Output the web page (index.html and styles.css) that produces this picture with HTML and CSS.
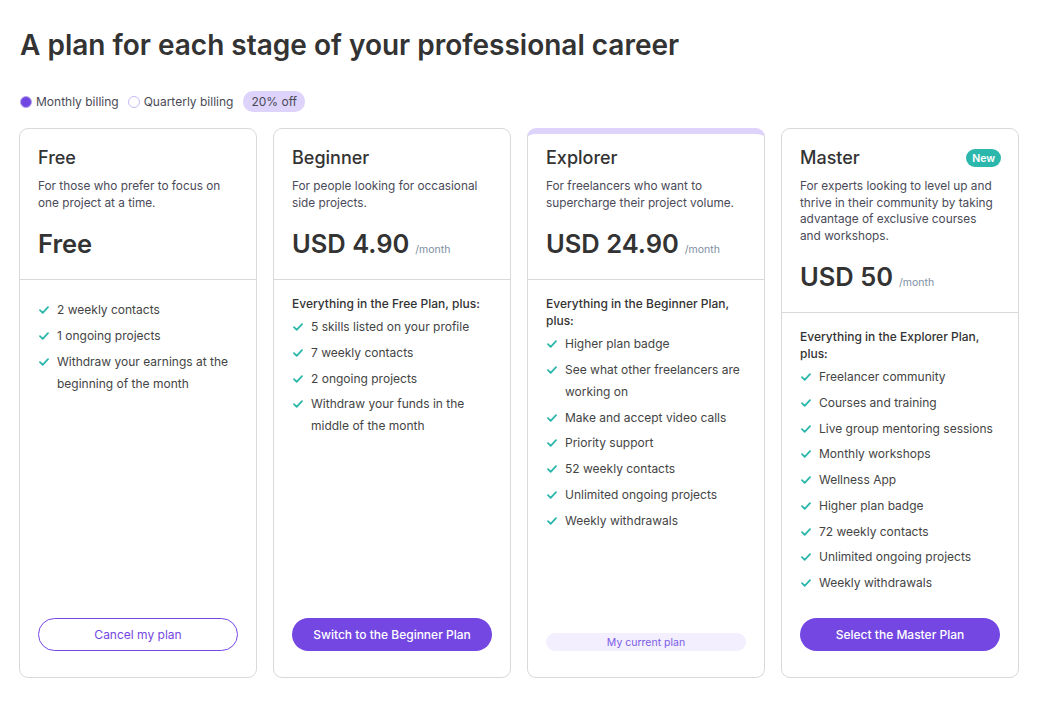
FILE: index.html
```html
<!DOCTYPE html>
<html lang="en">
<head>
<meta charset="utf-8">
<title>Plans</title>
<link rel="stylesheet" href="styles.css">
</head>
<body>
<main class="page">
  <h1 class="title">A plan for each stage of your professional career</h1>
  <div class="billing">
    <label class="radio"><span class="dot dot-on"></span>Monthly billing</label>
    <label class="radio"><span class="dot"></span>Quarterly billing</label>
    <span class="off">20% off</span>
  </div>

  <section class="plans">
    <article class="card">
      <header class="head">
        <h2 class="name">Free</h2>
        <p class="desc">For those who prefer to focus on one project at a time.</p>
        <div class="price"><span class="amount">Free</span></div>
      </header>
      <div class="features">
        <ul class="list list-first">
          <li><svg class="check" viewBox="0 0 10 8"><path d="M1 4.2 3.7 6.8 9 1.2"/></svg><span>2 weekly contacts</span></li>
          <li><svg class="check" viewBox="0 0 10 8"><path d="M1 4.2 3.7 6.8 9 1.2"/></svg><span>1 ongoing projects</span></li>
          <li><svg class="check" viewBox="0 0 10 8"><path d="M1 4.2 3.7 6.8 9 1.2"/></svg><span>Withdraw your earnings at the beginning of the month</span></li>
        </ul>
      </div>
      <footer class="foot"><button class="btn btn-outline">Cancel my plan</button></footer>
    </article>

    <article class="card">
      <header class="head">
        <h2 class="name">Beginner</h2>
        <p class="desc">For people looking for occasional side projects.</p>
        <div class="price"><span class="amount">USD 4.90</span><span class="per">/month</span></div>
      </header>
      <div class="features">
        <p class="intro">Everything in the Free Plan, plus:</p>
        <ul class="list">
          <li><svg class="check" viewBox="0 0 10 8"><path d="M1 4.2 3.7 6.8 9 1.2"/></svg><span>5 skills listed on your profile</span></li>
          <li><svg class="check" viewBox="0 0 10 8"><path d="M1 4.2 3.7 6.8 9 1.2"/></svg><span>7 weekly contacts</span></li>
          <li><svg class="check" viewBox="0 0 10 8"><path d="M1 4.2 3.7 6.8 9 1.2"/></svg><span>2 ongoing projects</span></li>
          <li><svg class="check" viewBox="0 0 10 8"><path d="M1 4.2 3.7 6.8 9 1.2"/></svg><span>Withdraw your funds in the middle of the month</span></li>
        </ul>
      </div>
      <footer class="foot"><button class="btn btn-solid">Switch to the Beginner Plan</button></footer>
    </article>

    <article class="card card-current">
      <header class="head">
        <h2 class="name">Explorer</h2>
        <p class="desc">For freelancers who want to supercharge their project volume.</p>
        <div class="price"><span class="amount">USD 24.90</span><span class="per">/month</span></div>
      </header>
      <div class="features">
        <p class="intro">Everything in the Beginner Plan, plus:</p>
        <ul class="list">
          <li><svg class="check" viewBox="0 0 10 8"><path d="M1 4.2 3.7 6.8 9 1.2"/></svg><span>Higher plan badge</span></li>
          <li><svg class="check" viewBox="0 0 10 8"><path d="M1 4.2 3.7 6.8 9 1.2"/></svg><span>See what other freelancers are working on</span></li>
          <li><svg class="check" viewBox="0 0 10 8"><path d="M1 4.2 3.7 6.8 9 1.2"/></svg><span>Make and accept video calls</span></li>
          <li><svg class="check" viewBox="0 0 10 8"><path d="M1 4.2 3.7 6.8 9 1.2"/></svg><span>Priority support</span></li>
          <li><svg class="check" viewBox="0 0 10 8"><path d="M1 4.2 3.7 6.8 9 1.2"/></svg><span>52 weekly contacts</span></li>
          <li><svg class="check" viewBox="0 0 10 8"><path d="M1 4.2 3.7 6.8 9 1.2"/></svg><span>Unlimited ongoing projects</span></li>
          <li><svg class="check" viewBox="0 0 10 8"><path d="M1 4.2 3.7 6.8 9 1.2"/></svg><span>Weekly withdrawals</span></li>
        </ul>
      </div>
      <footer class="foot"><span class="current">My current plan</span></footer>
    </article>

    <article class="card">
      <header class="head">
        <div class="name-row"><h2 class="name">Master</h2><span class="new">New</span></div>
        <p class="desc">For experts looking to level up and thrive in their community by taking advantage of exclusive courses and workshops.</p>
        <div class="price"><span class="amount">USD 50</span><span class="per">/month</span></div>
      </header>
      <div class="features">
        <p class="intro">Everything in the Explorer Plan, plus:</p>
        <ul class="list">
          <li><svg class="check" viewBox="0 0 10 8"><path d="M1 4.2 3.7 6.8 9 1.2"/></svg><span>Freelancer community</span></li>
          <li><svg class="check" viewBox="0 0 10 8"><path d="M1 4.2 3.7 6.8 9 1.2"/></svg><span>Courses and training</span></li>
          <li><svg class="check" viewBox="0 0 10 8"><path d="M1 4.2 3.7 6.8 9 1.2"/></svg><span>Live group mentoring sessions</span></li>
          <li><svg class="check" viewBox="0 0 10 8"><path d="M1 4.2 3.7 6.8 9 1.2"/></svg><span>Monthly workshops</span></li>
          <li><svg class="check" viewBox="0 0 10 8"><path d="M1 4.2 3.7 6.8 9 1.2"/></svg><span>Wellness App</span></li>
          <li><svg class="check" viewBox="0 0 10 8"><path d="M1 4.2 3.7 6.8 9 1.2"/></svg><span>Higher plan badge</span></li>
          <li><svg class="check" viewBox="0 0 10 8"><path d="M1 4.2 3.7 6.8 9 1.2"/></svg><span>72 weekly contacts</span></li>
          <li><svg class="check" viewBox="0 0 10 8"><path d="M1 4.2 3.7 6.8 9 1.2"/></svg><span>Unlimited ongoing projects</span></li>
          <li><svg class="check" viewBox="0 0 10 8"><path d="M1 4.2 3.7 6.8 9 1.2"/></svg><span>Weekly withdrawals</span></li>
        </ul>
      </div>
      <footer class="foot"><button class="btn btn-solid">Select the Master Plan</button></footer>
    </article>
  </section>
</main>
</body>
</html>
```

FILE: styles.css
```css
* { box-sizing: border-box; }
html, body { margin: 0; background: #fff; }
body {
  font-family: Inter, "Open Sans", "Liberation Sans", sans-serif;
  color: #333;
}
.page { padding: 26px 26px 0 19px; }
.title {
  margin: 0 0 0 1px;
  font-size: 28px;
  line-height: 38px;
  font-weight: 600;
  color: #333;
  letter-spacing: 0;
}
.billing {
  margin-top: 27px;
  height: 21px;
  display: flex;
  align-items: center;
  font-size: 12px;
  color: #4a4a55;
}
.radio { display: flex; align-items: center; margin-right: 8px; }
.dot {
  width: 12px; height: 12px; border-radius: 50%;
  border: 1px solid #c9b9f6; background: #fff;
  margin: 0 4px 0 1px;
}
.dot-on { background: #7047e1; border: 1.5px solid #b9a4f3; }
.off {
  display: inline-flex; align-items: center;
  height: 21px; padding: 0 8px; margin-left: 2px;
  background: #ddd3fb; border-radius: 10px;
  color: #4a4a55; font-size: 12px;
}
.plans {
  margin-top: 16px;
  display: grid;
  grid-template-columns: repeat(4, 238px);
  gap: 16px;
  height: 550px;
}
.card {
  border: 1px solid #d9d9dc;
  border-radius: 9px;
  display: flex;
  flex-direction: column;
  background: #fff;
}
.card-current { border-top: 6px solid #ddd3fb; }
.card-current .head { padding-top: 13px; }
.head { padding: 18px 18px 18px; border-bottom: 1px solid #d9d9dc; }
.name-row { display: flex; justify-content: space-between; align-items: center; }
.name { margin: 0; font-size: 18px; line-height: 22px; font-weight: 500; color: #333; }
.new {
  background: #2cb7ac; color: #fff; font-size: 10.5px; font-weight: 600;
  height: 18px; padding: 0 6px; border-radius: 9px;
  display: inline-flex; align-items: center;
  margin-right: -1px;
}
.desc { margin: 9px 0 0; font-size: 11.8px; line-height: 16.5px; color: #4a4a58; }
.price { margin-top: 16px; display: flex; align-items: baseline; height: 34px; }
.amount { font-size: 25.5px; line-height: 34px; font-weight: 600; color: #333; }
.per { margin-left: 6px; font-size: 10.5px; color: #7d8ea3; }
.features { padding: 15px 18px 0; flex: 1; }
.intro { margin: 0 0 4px; font-size: 12px; line-height: 17px; font-weight: 500; color: #333; }
.list { list-style: none; margin: 0; padding: 0; display: flex; flex-direction: column; gap: 3.75px; }
.list-first { margin-top: 4px; gap: 4px; }
.list li { display: flex; font-size: 12px; line-height: 22px; color: #444; }
.check {
  flex: none; width: 10px; height: 8px; margin: 7px 8px 0 1px;
  fill: none; stroke: #2cb7ac; stroke-width: 1.8; stroke-linecap: round; stroke-linejoin: round;
}
.foot { padding: 0 18px 26px; display: flex; align-items: flex-end; height: 59px; }
.btn {
  width: 100%; height: 33px; border-radius: 17px;
  font-family: inherit; font-size: 12px; font-weight: 500; cursor: pointer;
}
.btn-solid { background: #7447e2; color: #fff; border: 0; }
.btn-outline { background: #fff; color: #7447e2; border: 1px solid #7447e2; font-weight: 400; }
.current {
  width: 100%; height: 18px; border-radius: 9px;
  background: #f3effe; color: #7a5ce6; font-size: 10.5px;
  display: flex; align-items: center; justify-content: center;
}
```
